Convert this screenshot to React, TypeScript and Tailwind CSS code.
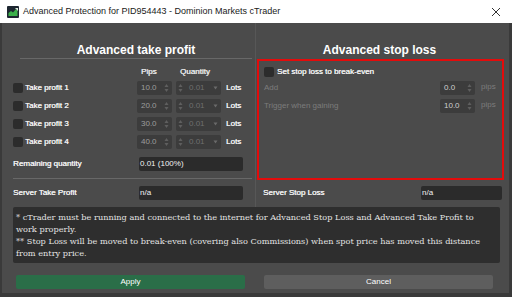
import React from "react";

const sans = { fontFamily: '"Liberation Sans", Arial, sans-serif' };

// tiny stacked up/down arrows used by the numeric spinners
const Arrows = () => (
  <svg width="5" height="10" viewBox="0 0 5 10" className="shrink-0">
    <path d="M2.5 1 L4.5 4 L0.5 4 Z" fill="#5f5f5f" />
    <path d="M2.5 9 L4.5 6 L0.5 6 Z" fill="#5f5f5f" />
  </svg>
);

const Check = () => (
  <div className="w-[10px] h-[10px] rounded-[2px] bg-[#2c2c2c] shrink-0" />
);

const PipsBox = ({ value, tone }: { value: string; tone: string }) => (
  <div className="w-[35px] h-[14px] bg-[#3c3c3c] rounded-[2px] flex items-center pl-[4px] pr-[3px]">
    <span className={`flex-1 text-[8px] leading-none ${tone}`}>{value}</span>
    <Arrows />
  </div>
);

const QtyBox = () => (
  <div className="w-[45px] h-[14px] bg-[#3c3c3c] rounded-[2px] flex items-center pl-[2px] pr-[3px] ml-[4px]">
    <Arrows />
    <span className="flex-1 text-[8px] leading-none text-[#6f6f6f] pl-[6px]">0.01</span>
    <svg width="5" height="4" viewBox="0 0 5 4">
      <path d="M0.5 0.5 L4.5 0.5 L2.5 3.5 Z" fill="#6a6a6a" />
    </svg>
  </div>
);

const TakeRow = ({ n, pips }: { n: number; pips: string }) => (
  <div className="flex items-center h-[14px]">
    <Check />
    <span className="w-[114px] pl-[2px] text-[8px] text-[#f2f2f2] [text-shadow:0.35px_0_0_#f2f2f2]">Take profit {n}</span>
    <PipsBox value={pips} tone="text-[#9c9c9c]" />
    <QtyBox />
    <span className="pl-[5px] text-[8px] text-[#f2f2f2] [text-shadow:0.35px_0_0_#f2f2f2]">Lots</span>
  </div>
);

const Field = ({ label, value, box }: { label: string; value: string; box: string }) => (
  <div className="flex items-center h-[14px]">
    <span className="flex-1 text-[8px] text-[#f2f2f2] [text-shadow:0.35px_0_0_#f2f2f2]">{label}</span>
    <div className={`${box} h-[14px] bg-[#2b2b2b] rounded-[2px] flex items-center px-[1px] text-[8px] text-[#f2f2f2]`}>
      {value}
    </div>
  </div>
);

export default function App() {
  return (
    <div className="w-[512px] h-[297px] flex flex-col overflow-hidden bg-[#3a3a3a]" style={sans}>
      {/* title bar */}
      <div className="h-[23px] bg-white flex items-center pl-[7px] pr-[11px] shrink-0">
        <svg width="12" height="12" viewBox="0 0 12 12" className="shrink-0">
          <rect width="12" height="12" rx="1" fill="#1d2630" />
          <path d="M1.5 10 L1.5 7 L4 5 L6 6.5 L9 3 L10.5 4.5 L10.5 10 Z" fill="#3bb04a" />
          <path d="M8 2 L11 2 L11 5 Z" fill="#dfe8df" />
        </svg>
        <span className="ml-[4px] flex-1 text-[9px] text-[#1a1a1a]">
          Advanced Protection for PID954443 - Dominion Markets cTrader
        </span>
        <svg width="10" height="10" viewBox="0 0 10 10">
          <path d="M1 1 L9 9 M9 1 L1 9" stroke="#333" strokeWidth="1" />
        </svg>
      </div>

      {/* dialog body */}
      <div className="flex-1 flex flex-col bg-[#4b4b4b] ml-[2px] mr-[3px] mb-[4px]">
        <div className="flex h-[184px]">
          {/* take profit column */}
          <div className="w-[253px] pl-[11px] pr-[3px] flex flex-col">
            <div className="h-[36px] pt-[14px] ml-[7px] border-b border-[#686868] text-center">
              <span className="text-[12px] leading-[14px] font-bold text-white">Advanced take profit</span>
            </div>
            <div className="mt-[6px] h-[14px] flex items-center text-[8px] text-[#e8e8e8] [text-shadow:0.35px_0_0_#e8e8e8]">
              <span className="w-[128px]" />
              <span className="w-[39px]">Pips</span>
              <span>Quantity</span>
            </div>
            <div className="mt-[2px] flex flex-col gap-[4px]">
              <TakeRow n={1} pips="10.0" />
              <TakeRow n={2} pips="20.0" />
              <TakeRow n={3} pips="30.0" />
              <TakeRow n={4} pips="40.0" />
            </div>
            <div className="mt-[8px] pr-[9px]">
              <Field label="Remaining quantity" value="0.01 (100%)" box="w-[104px]" />
            </div>
            <div className="mt-[7px] h-px bg-[#686868]" />
            <div className="mt-[7px] pr-[9px]">
              <Field label="Server Take Profit" value="n/a" box="w-[104px]" />
            </div>
          </div>

          {/* stop loss column */}
          <div className="flex-1 border-l border-[#575757] flex flex-col">
            <div className="h-[36px] pt-[14px] mr-[6px] text-center">
              <span className="text-[12px] leading-[14px] font-bold text-white">Advanced stop loss</span>
            </div>
            <div className="ml-[1px] w-[247px] h-[121px] border-2 border-[#e30b0b] px-[5px] pt-[6px] flex flex-col">
              <div className="flex items-center h-[10px]">
                <Check />
                <span className="pl-[3px] text-[8px] text-[#f2f2f2] [text-shadow:0.35px_0_0_#f2f2f2]">Set stop loss to break-even</span>
              </div>
              <div className="mt-[5px] flex items-center h-[12px]">
                <span className="flex-1 text-[8px] text-[#7c7c7c]">Add</span>
                <PipsBox value="0.0" tone="text-[#cfcfcf]" />
                <span className="w-[22px] pl-[6px] text-[8px] text-[#7c7c7c] -mt-[2px]">pips</span>
              </div>
              <div className="mt-[6px] flex items-center h-[12px]">
                <span className="flex-1 text-[8px] text-[#7c7c7c]">Trigger when gaining</span>
                <PipsBox value="10.0" tone="text-[#cfcfcf]" />
                <span className="w-[22px] pl-[6px] text-[8px] text-[#7c7c7c] -mt-[2px]">pips</span>
              </div>
            </div>
            <div className="mt-[6px] pl-[7px] pr-[7px]">
              <Field label="Server Stop Loss" value="n/a" box="w-[81px]" />
            </div>
          </div>
        </div>

        {/* notes */}
        <div
          className="ml-[11px] w-[487px] h-[56px] bg-[#2e2e2e] rounded-[2px] pl-[3px] pr-[8px] pt-[4px] text-[8.2px] leading-[12px] text-[#e4e4e4]"
          style={{ fontFamily: '"DejaVu Serif", serif' }}
        >
          <p>* cTrader must be running and connected to the internet for Advanced Stop Loss and Advanced Take Profit to work properly.</p>
          <p>** Stop Loss will be moved to break-even (covering also Commissions) when spot price has moved this distance from entry price.</p>
        </div>

        {/* buttons */}
        <div className="mt-[12px] ml-[14px] flex gap-[19px]">
          <button className="w-[229px] h-[14px] rounded-[2px] bg-[#2a6e48] text-[8px] text-white leading-none">Apply</button>
          <button className="w-[229px] h-[14px] rounded-[2px] bg-[#5e5e5e] text-[8px] text-white leading-none">Cancel</button>
        </div>
      </div>
    </div>
  );
}
